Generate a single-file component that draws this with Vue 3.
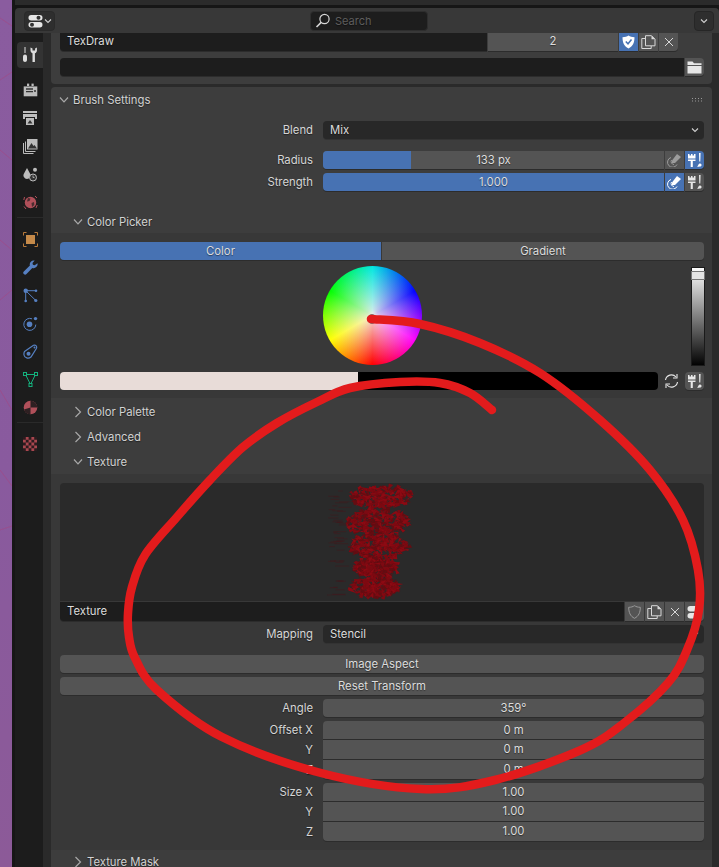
<script setup>
function rng(seed) {
  let s = seed
  return () => {
    s = (s * 16807) % 2147483647
    return s / 2147483647
  }
}
const lobes = [
  [381, 497, 31, 11],
  [378, 522, 32, 13],
  [379, 546, 29, 13],
  [377, 567, 22, 10],
  [375, 587, 25, 10]
]
const r = rng(7391)
const bits = []
for (const [cx, cy, rx, ry] of lobes) {
  for (let i = 0; i < 260; i++) {
    const a = r() * 6.283
    const d = Math.sqrt(r())
    const x = cx + Math.cos(a) * d * rx
    const y = cy + Math.sin(a) * d * ry
    const b = r() * 6.283
    const l = 1.4 + r() * 2.4
    const pts = [0, 2.6, 3.6]
      .map((t) => `${(x + Math.cos(b + t) * l * 1.3).toFixed(1)},${(y + Math.sin(b + t) * l).toFixed(1)}`)
      .join(' ')
    const pick = r()
    bits.push({ pts, fill: pick > 0.75 ? '#640d12' : pick > 0.3 ? '#7d0a12' : '#8c0a13' })
  }
}
const faint = []
for (let i = 0; i < 46; i++) {
  faint.push({ x: 327 + r() * 14, y: 488 + r() * 108, w: 4 + r() * 10 })
}

const stroke = [
  [371, 319], [420, 324], [480, 343], [540, 373], [600, 420], [650, 470], [683, 520],
  [698, 570], [699, 610], [687, 650], [668, 683], [624, 723], [581, 750], [495, 780],
  [421, 789], [321, 773], [222, 737], [157, 690], [135, 658], [129, 637], [128, 613],
  [132, 587], [145, 555], [177, 517], [210, 480], [243, 447], [277, 423], [317, 402],
  [350, 388], [400, 382], [440, 383], [470, 393], [492, 410]
]
function smooth(p) {
  let d = `M${p[0][0]} ${p[0][1]}`
  for (let i = 0; i < p.length - 1; i++) {
    const a = p[Math.max(i - 1, 0)]
    const b = p[i]
    const c = p[i + 1]
    const e = p[Math.min(i + 2, p.length - 1)]
    const c1 = [b[0] + (c[0] - a[0]) / 6, b[1] + (c[1] - a[1]) / 6]
    const c2 = [c[0] - (e[0] - b[0]) / 6, c[1] - (e[1] - b[1]) / 6]
    d += `C${c1[0].toFixed(1)} ${c1[1].toFixed(1)} ${c2[0].toFixed(1)} ${c2[1].toFixed(1)} ${c[0]} ${c[1]}`
  }
  return d
}
const strokePath = smooth(stroke)

const offset = [
  { label: 'Offset X', value: '0 m' },
  { label: 'Y', value: '0 m' },
  { label: 'Z', value: '0 m' }
]
const size = [
  { label: 'Size X', value: '1.00' },
  { label: 'Y', value: '1.00' },
  { label: 'Z', value: '1.00' }
]
</script>

<template>
  <div class="window">
    <div class="wallpaper">
      <svg width="12" height="867" viewBox="0 0 12 867">
        <path d="M0 18 12 26M0 80 12 72M0 150 12 160M0 240 12 250M0 300 12 290M0 390 12 410M0 470 12 486M0 530 12 526" stroke="#a04a88" stroke-width="1" fill="none" opacity=".7" />
      </svg>
    </div>
    <div class="editor">
      <div class="topstrip"></div>
      <header class="topbar">
        <button class="editor-type">
          <svg width="16" height="14" viewBox="0 0 16 14">
            <rect x=".5" y="1" width="14" height="5.4" rx="2.7" fill="#e6e6e6" />
            <rect x=".5" y="8" width="14" height="5.4" rx="2.7" fill="#e6e6e6" />
            <circle cx="10.5" cy="3.7" r="2" fill="#333" />
            <circle cx="4" cy="10.7" r="2" fill="#333" />
          </svg>
          <svg class="drop" width="8" height="6" viewBox="0 0 8 6"><path d="M1 1.5 4 4.5 7 1.5" stroke="#d0d0d0" stroke-width="1.1" fill="none" /></svg>
        </button>
        <div class="search">
          <svg width="16" height="16" viewBox="0 0 16 16">
            <circle cx="9.5" cy="6" r="4.6" stroke="#d8d8d8" stroke-width="1.2" fill="none" />
            <path d="M6.2 9.4 1.5 14" stroke="#d8d8d8" stroke-width="1.6" fill="none" />
          </svg>
          <span>Search</span>
        </div>
        <button class="options">
          <svg width="8" height="6" viewBox="0 0 8 6"><path d="M1 1.5 4 4.5 7 1.5" stroke="#d0d0d0" stroke-width="1.1" fill="none" /></svg>
        </button>
      </header>

      <div class="body">
        <nav class="tabs">
          <div class="tab active">
            <svg width="16" height="16" viewBox="0 0 16 16">
              <path d="M3 0v6" stroke="#ddd" stroke-width="1" /><path d="M1 9.5c0-1.2 1-2 2-2s2 .8 2 2V13c0 1-1 2-2 2s-2-1-2-2z" fill="#ddd" />
              <path d="M8.5.5v3c0 1.4 1.2 2.5 2 2.8V15h2.4V6.3c1-.4 2-1.4 2-2.8v-3l-1.8 1v2h-2.6v-2z" fill="#ddd" />
            </svg>
          </div>
          <div class="tab first">
            <svg width="15" height="14" viewBox="0 0 15 14">
              <path d="M.7 3.4h13.6v9.900H.7z" fill="#bcbcbc" /><rect x="4" y=".6" width="2.200" height="2.400" fill="#bcbcbc" /><rect x="8.500" y=".6" width="2.200" height="2.400" fill="#bcbcbc" /><path d="M3 6h7M3 8.600h7" stroke="#333" stroke-width="1.300" /><circle cx="12" cy="8" r="1" fill="#333" />
            </svg>
          </div>
          <div class="tab">
            <svg width="15" height="14" viewBox="0 0 15 14"><path d="M0 0h14v2H0zM0 3h14v5h-2V6H2v2H0z" fill="#bcbcbc" /><path d="M3 7h8v7H3z" fill="#bcbcbc" /><path d="M4.500 12.500 7 9l2.500 3.500z" fill="#333" /></svg>
          </div>
          <div class="tab">
            <svg width="15" height="15" viewBox="0 0 15 15"><path d="M.5 4v10.500h10M2.500 2.500v10h10" stroke="#bcbcbc" stroke-width="1" fill="none" /><rect x="4" y="0" width="10.500" height="10.500" fill="#bcbcbc" /><path d="M5 9.500 8.500 4 10.500 7 11.500 6 14 9.500z" fill="#333" /></svg>
          </div>
          <div class="tab">
            <svg width="15" height="15" viewBox="0 0 15 15"><path d="M4 1 7 6.500A3.600 3.600 0 0 1 4 12 3.600 3.600 0 0 1 1 6.500z" fill="#bcbcbc" /><circle cx="12" cy="2.800" r="2" fill="#bcbcbc" /><circle cx="10" cy="10.500" r="3.500" stroke="#bcbcbc" stroke-width="1" fill="#333" /><path d="M10 8.500v2h1.500" stroke="#bcbcbc" stroke-width=".8" fill="none" /></svg>
          </div>
          <div class="tab">
            <svg width="15" height="15" viewBox="0 0 15 15"><circle cx="7.500" cy="7.500" r="5.700" fill="#b0505a" /><path d="M5 3l2.500.5-1 2.500-2.500.5zM8.500 8l2.500-1 .3 3-2.300 2z" fill="#4a2c30" /><path d="M1.500 2 .8 5M13 13l1.200-3M1 11.500 3 14M12 1l2 2" stroke="#b0505a" stroke-width="1" fill="none" /></svg>
          </div>
          <div class="sep"></div>
          <div class="tab">
            <svg width="15" height="15" viewBox="0 0 15 15"><rect x="3" y="3" width="9" height="9" fill="#c58a4a" /><path d="M.5 3.500v-3h3M11.500.5h3v3M14.500 11.500v3h-3M3.500 14.500h-3v-3" stroke="#b97a3a" stroke-width="1" fill="none" /></svg>
          </div>
          <div class="tab">
            <svg width="15" height="15" viewBox="0 0 15 15"><path d="M14.500 3.200a4 4 0 0 1-5.200 4.700L3.500 14a1.800 1.800 0 0 1-2.700-2.600L6.900 5.600A4 4 0 0 1 11.700.6L9.500 3l.4 1.800 1.800.4z" fill="#5680c2" /></svg>
          </div>
          <div class="tab">
            <svg width="15" height="15" viewBox="0 0 15 15"><circle cx="2.700" cy="2.700" r="2.200" fill="#5680c2" /><circle cx="2.700" cy="13" r="1.300" fill="#5680c2" /><circle cx="13" cy="2.700" r="1.300" fill="#5680c2" /><circle cx="12.800" cy="12.500" r="1.600" fill="#5680c2" /><path d="M2.700 3v10M3 2.700h10M3 3 12.800 12.500" stroke="#5680c2" stroke-width="1" /></svg>
          </div>
          <div class="tab">
            <svg width="15" height="15" viewBox="0 0 15 15"><circle cx="6.500" cy="8.200" r="2.800" fill="#5680c2" /><path d="M9 2.800a6 6 0 1 0 3.800 5.800" stroke="#5680c2" stroke-width="1" fill="none" /><circle cx="12.500" cy="2.600" r="1.700" fill="#5680c2" /></svg>
          </div>
          <div class="tab">
            <svg width="15" height="15" viewBox="0 0 15 15"><path d="M1.500 7.500 10.500 1.300c2-.9 3.700.9 3 2.900L8 13c-2.500 2-6.500 1-7-2-.2-1.300 0-2.500.5-3.500z" stroke="#5680c2" stroke-width="1.200" fill="none" /><circle cx="5.500" cy="9.700" r="2" fill="#5680c2" /><circle cx="11.500" cy="3.500" r="1" fill="#5680c2" /></svg>
          </div>
          <div class="tab">
            <svg width="15" height="15" viewBox="0 0 15 15"><path d="M2.500 2.500h10L7.500 12.500z" stroke="#14b07c" stroke-width="1" fill="none" /><rect x=".5" y=".5" width="3" height="3" fill="#1c1c1c" stroke="#14b07c" /><rect x="11.500" y=".5" width="3" height="3" fill="#1c1c1c" stroke="#14b07c" /><rect x="6" y="11.500" width="3" height="3" fill="#1c1c1c" stroke="#14b07c" /></svg>
          </div>
          <div class="tab">
            <svg width="15" height="15" viewBox="0 0 15 15"><circle cx="7.500" cy="7.500" r="6.800" fill="#b0505a" /><path d="M7.500 .7a6.800 6.800 0 0 1 6.800 6.800H7.500zM7.500 7.500v6.800A6.800 6.800 0 0 1 1 9.500z" fill="#2e2022" /></svg>
          </div>
          <div class="sep two"></div>
          <div class="tab">
            <svg width="14" height="14" viewBox="0 0 14 14"><rect width="14" height="14" fill="#a8474f" /><path d="M0 0h2.800v2.800H0zM5.600 0h2.800v2.800H5.600zM11.200 0H14v2.800h-2.800zM2.800 2.800h2.800v2.800H2.800zM8.400 2.800h2.800v2.800H8.400zM0 5.600h2.800v2.800H0zM5.600 5.600h2.800v2.800H5.600zM11.200 5.600H14v2.800h-2.800zM2.800 8.400h2.800v2.800H2.800zM8.400 8.400h2.800v2.800H8.400zM0 11.200h2.800V14H0zM5.600 11.200h2.800V14H5.600zM11.200 11.200H14V14h-2.800z" fill="#2b1b1e" /></svg>
          </div>
        </nav>

        <main class="scroller">
          <section class="panel top-panel">
            <div class="inline">
              <div class="dark field-name">TexDraw</div>
              <div class="users">2</div>
              <div class="icon-btn blue">
                <svg width="13" height="14" viewBox="0 0 13 14"><path d="M6.500 .5c1.500 1 3.500 1.600 6 1.700 0 5-1.500 9-6 11.300C2 11.200.5 7.200.5 2.200 3 2.100 5 1.500 6.500 .5z" fill="#fff" /><path d="M3.800 6.500 6 8.800 9.500 4.500" stroke="#4772b3" stroke-width="1.500" fill="none" /></svg>
              </div>
              <div class="icon-btn">
                <svg width="15" height="14" viewBox="0 0 15 14"><path d="M4.500 3.500H.8v10h9.400V11M4.500 .7h6l3.500 3.500v6.600H4.500z" stroke="#d8d8d8" stroke-width="1" fill="none" /><path d="M10.500 .7v3.500H14" fill="#d8d8d8" /></svg>
              </div>
              <div class="icon-btn last">
                <svg width="10" height="10" viewBox="0 0 10 10"><path d="M1 1l8 8M9 1 1 9" stroke="#d8d8d8" stroke-width="1" /></svg>
              </div>
            </div>
            <div class="inline path-row">
              <div class="dark path"></div>
              <div class="icon-btn solo">
                <svg width="15" height="13" viewBox="0 0 15 13"><path d="M.5 .5h5l1.500 1.800h7.500V4H.5z" fill="#e6e6e6" /><path d="M.5 5h14v7.500H.5z" fill="#e6e6e6" /></svg>
              </div>
            </div>
          </section>

          <section class="panel main-panel">
            <div class="panel-head">
              <svg class="chev" width="10" height="8" viewBox="0 0 10 8"><path d="M1 1.500 5 5.800 9 1.500" stroke="#a8a8a8" stroke-width="1.200" fill="none" /></svg>
              <span>Brush Settings</span>
              <svg class="grip" width="12" height="4" viewBox="0 0 12 4"><path d="M0 .5h1M3 .5h1M6 .5h1M9 .5h1M0 3h1M3 3h1M6 3h1M9 3h1" stroke="#9a9a9a" stroke-width="1.200" /></svg>
            </div>

            <div class="content">
              <div class="prop blend">
                <label>Blend</label>
                <div class="select"><span>Mix</span>
                  <svg width="8" height="6" viewBox="0 0 8 6"><path d="M1 1.500 4 4.500 7 1.500" stroke="#d0d0d0" stroke-width="1.100" fill="none" /></svg>
                </div>
              </div>
              <div class="prop radius">
                <label>Radius</label>
                <div class="slider-line">
                  <div class="slider">
                    <div class="fill radius-fill"></div><span>133 px</span>
                  </div>
                  <div class="mini">
                    <svg width="15" height="14" viewBox="0 0 15 14"><path d="M10 1 14 4 8 10H5V7.500z" fill="#9c9c9c" /><path d="M4 4.500A5 5 0 1 0 10 11.500M4.500 7A3 3 0 0 0 7 11.500" stroke="#9c9c9c" stroke-width="1" fill="none" /></svg>
                  </div>
                  <div class="mini blue end">
                    <svg width="15" height="14" viewBox="0 0 15 14"><path d="M1 1h1.500v1.500H4V1h1.500v1.500H7V1h1.500v4.500H1zM1 6.500h7.500v1.500H5.800V14H3.700V8H1z" fill="#fff" /><path d="M12 0h1.600l-.3 8.500h-1z" fill="#fff" /><path d="M10 13.500c1.200 0 1-2.500 2.500-3s2.300.8 2 2-2.500 1.400-4.500 1z" fill="#fff" /></svg>
                  </div>
                </div>
              </div>
              <div class="prop strength">
                <label>Strength</label>
                <div class="slider-line">
                  <div class="slider full"><span>1.000</span></div>
                  <div class="mini blue">
                    <svg width="15" height="14" viewBox="0 0 15 14"><path d="M10 1 14 4 8 10H5V7.500z" fill="#fff" /><path d="M4 4.500A5 5 0 1 0 10 11.500M4.500 7A3 3 0 0 0 7 11.500" stroke="#fff" stroke-width="1" fill="none" /></svg>
                  </div>
                  <div class="mini end">
                    <svg width="15" height="14" viewBox="0 0 15 14"><path d="M1 1h1.500v1.500H4V1h1.500v1.500H7V1h1.500v4.500H1zM1 6.500h7.500v1.500H5.800V14H3.700V8H1z" fill="#e6e6e6" /><path d="M12 0h1.600l-.3 8.500h-1z" fill="#e6e6e6" /><path d="M10 13.500c1.200 0 1-2.500 2.500-3s2.300.8 2 2-2.500 1.400-4.500 1z" fill="#e6e6e6" /></svg>
                  </div>
                </div>
              </div>
            </div>

            <div class="sub-head picker-head">
              <svg class="chev" width="10" height="8" viewBox="0 0 10 8"><path d="M1 1.500 5 5.800 9 1.500" stroke="#a8a8a8" stroke-width="1.200" fill="none" /></svg>
              <span>Color Picker</span>
            </div>
            <div class="sub-body picker">
              <div class="seg">
                <div class="seg-on">Color</div>
                <div class="seg-off">Gradient</div>
              </div>
              <div class="wheel-row">
                <div class="wheel"><i class="cursor"></i></div>
                <div class="value"><i class="handle"></i></div>
              </div>
              <div class="swatch-row">
                <div class="swatch"><div class="swatch-a"></div><div class="swatch-b"></div></div>
                <div class="swap">
                  <svg width="15" height="14" viewBox="0 0 15 14"><path d="M1.500 6A6 6 0 0 1 12 3M13.500 8A6 6 0 0 1 3 11" stroke="#e6e6e6" stroke-width="1.100" fill="none" /><path d="M13 0v4H9M2 14v-4h4" stroke="#e6e6e6" stroke-width="1.100" fill="none" /></svg>
                </div>
                <div class="mini solo-mini">
                  <svg width="15" height="14" viewBox="0 0 15 14"><path d="M1 1h1.500v1.500H4V1h1.500v1.500H7V1h1.500v4.500H1zM1 6.500h7.500v1.500H5.800V14H3.700V8H1z" fill="#e6e6e6" /><path d="M12 0h1.600l-.3 8.500h-1z" fill="#e6e6e6" /><path d="M10 13.500c1.200 0 1-2.500 2.500-3s2.300.8 2 2-2.500 1.400-4.500 1z" fill="#e6e6e6" /></svg>
                </div>
              </div>
            </div>

            <div class="sub-head closed first-closed">
              <svg class="chev" width="8" height="12" viewBox="0 0 8 12"><path d="M1.500 1 6.500 6 1.500 11" stroke="#a8a8a8" stroke-width="1.200" fill="none" /></svg>
              <span>Color Palette</span>
            </div>
            <div class="sub-head closed">
              <svg class="chev" width="8" height="12" viewBox="0 0 8 12"><path d="M1.500 1 6.500 6 1.500 11" stroke="#a8a8a8" stroke-width="1.200" fill="none" /></svg>
              <span>Advanced</span>
            </div>
            <div class="sub-head">
              <svg class="chev" width="10" height="8" viewBox="0 0 10 8"><path d="M1 1.500 5 5.800 9 1.500" stroke="#a8a8a8" stroke-width="1.200" fill="none" /></svg>
              <span>Texture</span>
            </div>

            <div class="sub-body texture">
              <div class="preview"></div>
              <div class="inline tex-name">
                <div class="dark name">Texture</div>
                <div class="icon-btn">
                  <svg width="13" height="14" viewBox="0 0 13 14"><path d="M6.500 .7c1.500 1 3.500 1.600 5.800 1.600 0 5-1.500 8.900-5.800 11C2.200 11.200.7 7.300.7 2.300 3 2.300 5 1.700 6.500 .7z" stroke="#9a9a9a" stroke-width="1" fill="none" /></svg>
                </div>
                <div class="icon-btn">
                  <svg width="15" height="14" viewBox="0 0 15 14"><path d="M4.500 3.500H.8v10h9.400V11M4.500 .7h6l3.500 3.500v6.600H4.500z" stroke="#d8d8d8" stroke-width="1" fill="none" /><path d="M10.500 .7v3.500H14" fill="#d8d8d8" /></svg>
                </div>
                <div class="icon-btn">
                  <svg width="10" height="10" viewBox="0 0 10 10"><path d="M1 1l8 8M9 1 1 9" stroke="#d8d8d8" stroke-width="1" /></svg>
                </div>
                <div class="icon-btn last">
                  <svg width="16" height="14" viewBox="0 0 16 14"><rect x=".5" y="1" width="14" height="5.400" rx="2.700" fill="#e6e6e6" /><rect x=".5" y="8" width="14" height="5.400" rx="2.700" fill="#e6e6e6" /></svg>
                </div>
              </div>

              <div class="prop mapping">
                <label>Mapping</label>
                <div class="select"><span>Stencil</span>
                  <svg width="8" height="6" viewBox="0 0 8 6"><path d="M1 1.500 4 4.500 7 1.500" stroke="#d0d0d0" stroke-width="1.100" fill="none" /></svg>
                </div>
              </div>

              <button class="wide aspect">Image Aspect</button>
              <button class="wide reset">Reset Transform</button>

              <div class="prop angle">
                <label>Angle</label>
                <div class="num round">359°</div>
              </div>

              <div class="group offset">
                <div v-for="(row, i) in offset" :key="row.label" class="prop">
                  <label>{{ row.label }}</label>
                  <div class="num" :class="{ 'cap-top': i === 0, 'cap-bot': i === 2 }">{{ row.value }}</div>
                </div>
              </div>
              <div class="group size">
                <div v-for="(row, i) in size" :key="row.label" class="prop">
                  <label>{{ row.label }}</label>
                  <div class="num" :class="{ 'cap-top': i === 0, 'cap-bot': i === 2 }">{{ row.value }}</div>
                </div>
              </div>
            </div>

            <div class="sub-head closed">
              <svg class="chev" width="8" height="12" viewBox="0 0 8 12"><path d="M1.500 1 6.500 6 1.500 11" stroke="#a8a8a8" stroke-width="1.200" fill="none" /></svg>
              <span>Texture Mask</span>
            </div>
          </section>
        </main>
      </div>
    </div>

    <svg class="scribble" width="719" height="867" viewBox="0 0 719 867">
      <g>
        <rect v-for="(f, i) in faint" :key="'f' + i" :x="f.x" :y="f.y" :width="f.w" height="1" fill="#4a1418" opacity=".4" />
        <polygon v-for="(b, i) in bits" :key="i" :points="b.pts" :fill="b.fill" />
      </g>
      <path :d="strokePath" fill="none" stroke="#e31b1c" stroke-width="8.500" stroke-linecap="round" stroke-linejoin="round" />
    </svg>
  </div>
</template>

<style>
html, body { margin: 0; background: #1a1a1a; }
</style>

<style scoped>
.window {
  position: relative;
  width: 719px;
  height: 867px;
  overflow: hidden;
  display: flex;
  background: #161616;
  font-family: Inter, "Liberation Sans", sans-serif;
  font-size: 11.3px;
  color: #dcdcdc;
  text-shadow: 0 1px 1px rgba(0, 0, 0, .45);
}
.wallpaper {
  width: 12px;
  flex: none;
  background: linear-gradient(#8a5c9f, #895a9e 55%, #8c5a98);
}
.wallpaper svg { display: block; }
.editor {
  flex: 1;
  margin-left: 3px;
  min-width: 0;
  display: flex;
  flex-direction: column;
}
.topstrip {
  height: 5px;
  margin-bottom: 3px;
  flex: none;
  background: #2b2b2b;
}
.topbar {
  height: 25px;
  flex: none;
  display: flex;
  align-items: center;
  padding: 0 5px 0 9px;
  background: #383838;
  border-radius: 4px 4px 0 0;
  position: relative;
}
.editor-type {
  width: 31px;
  height: 20px;
  box-sizing: border-box;
  padding: 0 0 0 3px;
  display: flex;
  align-items: center;
  gap: 0;
  background: #2e2e2e;
  border: 1px solid #2a2a2a;
  border-radius: 4px;
}
.search {
  width: 118px;
  height: 20px;
  box-sizing: border-box;
  margin-left: 255px;
  padding-left: 4px;
  display: flex;
  align-items: center;
  gap: 4px;
  background: #1d1d1d;
  border: 1px solid #2e2e2e;
  border-radius: 4px;
  color: #5e5e5e;
  font-size: 11px;
}
.options {
  width: 20px;
  height: 20px;
  box-sizing: border-box;
  padding: 0;
  margin-left: auto;
  display: flex;
  align-items: center;
  justify-content: center;
  background: #2e2e2e;
  border: 1px solid #262626;
  border-radius: 4px;
}
.body {
  flex: 1;
  min-height: 0;
  display: flex;
  background: #2a2a2a;
}
.tabs {
  width: 28px;
  flex: none;
  display: flex;
  flex-direction: column;
  align-items: stretch;
  padding-top: 9px;
  box-sizing: border-box;
  background: #1c1c1c;
}
.tab {
  height: 28px;
  margin-left: 2px;
  display: flex;
  align-items: center;
  justify-content: center;
}
.tab svg { display: block; }
.tab.active {
  height: 26px;
  background: #333;
  border-radius: 4px 0 0 4px;
}
.tab.first { margin-top: 8px; }
.sep {
  height: 1px;
  background: #2a2a2a;
  margin: 1px 0 7px 2px;
}
.scroller {
  flex: 1;
  min-width: 0;
  padding: 0 7px 0 8px;
  overflow: hidden;
}
.panel { width: 661px; }
.top-panel {
  box-sizing: border-box;
  height: 51px;
  padding: 0 8px 0 9px;
  background: #3d3d3d;
  border-radius: 0 0 4px 4px;
}
.inline { display: flex; height: 18px; }
.dark {
  background: #1d1d1d;
  border-radius: 4px;
  box-shadow: 0 1px 0 #2c2c2c;
}
.field-name {
  width: 427px;
  box-sizing: border-box;
  padding-left: 7px;
  line-height: 16px;
  border-radius: 0 0 0 4px;
}
.users {
  width: 130px;
  text-align: center;
  margin-left: 1px;
  line-height: 16px;
  background: #545454;
  box-shadow: 0 1px 0 #2c2c2c;
}
.icon-btn {
  width: 19px;
  margin-left: 1px;
  display: flex;
  align-items: center;
  justify-content: center;
  background: #545454;
  box-shadow: 0 1px 0 #2c2c2c;
}
.icon-btn.last { border-radius: 0 0 4px 0; }
.icon-btn.blue { background: #4772b3; }
.path-row { margin-top: 7px; }
.path { flex: 1; border-radius: 4px 0 0 4px; }
.icon-btn.solo { border-radius: 0 4px 4px 0; }
.main-panel {
  margin-top: 3px;
  background: #3d3d3d;
  border-radius: 4px 4px 0 0;
}
.panel-head {
  height: 26px;
  padding: 0 8px;
  display: flex;
  align-items: center;
  color: #d2d2d2;
}
.panel-head .chev { margin-right: 4px; }
.grip { margin-left: auto; }
.content { padding: 8px 8px 0 9px; }
.prop {
  display: grid;
  grid-template-columns: 253px 381px;
  column-gap: 10px;
  height: 18px;
  align-items: center;
}
.prop label { text-align: right; color: #d6d6d6; }
.select {
  height: 18px;
  box-sizing: border-box;
  padding: 0 5px 0 7px;
  display: flex;
  align-items: center;
  justify-content: space-between;
  background: #282828;
  border-radius: 4px;
  box-shadow: 0 1px 0 #333;
}
.radius { margin-top: 12px; }
.strength { margin-top: 4px; }
.slider-line { display: flex; height: 18px; }
.slider {
  position: relative;
  width: 341px;
  height: 18px;
  background: #545454;
  border-radius: 4px 0 0 4px;
  box-shadow: 0 1px 0 #2c2c2c;
  text-align: center;
  line-height: 18px;
}
.slider span { position: relative; }
.slider.full { background: #4772b3; }
.fill {
  position: absolute;
  left: 0;
  top: 0;
  bottom: 0;
  background: #4772b3;
  border-radius: 4px 0 0 4px;
}
.radius-fill { width: 88px; }
.mini {
  width: 19px;
  height: 18px;
  margin-left: 1px;
  display: flex;
  align-items: center;
  justify-content: center;
  background: #545454;
  box-shadow: 0 1px 0 #2c2c2c;
}
.mini.blue { background: #4772b3; }
.mini.end { border-radius: 0 4px 4px 0; }
.sub-head {
  height: 24px;
  box-sizing: border-box;
  padding-left: 22px;
  display: flex;
  align-items: center;
  color: #d2d2d2;
}
.sub-head .chev { width: 10px; margin-right: 4px; }
.picker-head { margin-top: 18px; padding-top: 1px; }
.closed .chev { width: 8px; margin: 0 5px 0 1px; }
.first-closed { margin-top: 2px; }
.sub-head.closed { margin-bottom: 1px; }
.sub-body {
  background: #383838;
  padding: 9px 8px 8px 9px;
}
.seg { display: flex; height: 18px; box-shadow: 0 1px 0 #2c2c2c; border-radius: 4px; }
.seg-on, .seg-off { text-align: center; line-height: 18px; }
.seg-on {
  width: 321px;
  background: #4772b3;
  border-radius: 4px 0 0 4px;
}
.seg-off {
  flex: 1;
  margin-left: 1px;
  background: #545454;
  border-radius: 0 4px 4px 0;
}
.wheel-row {
  position: relative;
  height: 112px;
  padding-top: 6px;
  box-sizing: border-box;
}
.wheel {
  width: 99px;
  height: 99px;
  margin-left: 263px;
  border-radius: 50%;
  position: relative;
  background:
    radial-gradient(circle closest-side, #f4eeea 0%, rgba(244, 238, 234, .8) 12%, rgba(255, 255, 255, 0) 100%),
    conic-gradient(#00e8e0, #0000ff 60deg, #ff00ff 120deg, #ff0000 180deg, #ffff00 240deg, #00ff00 300deg, #00e8e0);
}
.cursor {
  position: absolute;
  left: 44px;
  top: 48px;
  width: 10px;
  height: 10px;
  box-sizing: border-box;
  border: 1px solid #777;
  border-radius: 50%;
}
.value {
  position: absolute;
  top: 7px;
  right: -1px;
  width: 14px;
  height: 99px;
  background: linear-gradient(#fff, #000);
  box-shadow: 0 0 0 1px #1a1a1a inset;
}
.handle {
  position: absolute;
  left: 0;
  right: 0;
  top: 4px;
  height: 9px;
  background: #e4e4e4;
  border: 1px solid #777;
  box-sizing: border-box;
}
.swatch-row { display: flex; height: 18px; }
.swatch {
  width: 598px;
  display: flex;
  border-radius: 4px;
  overflow: hidden;
}
.swatch-a { width: 298px; background: #e8dcd8; }
.swatch-b { flex: 1; background: #000; }
.swap {
  width: 27px;
  display: flex;
  align-items: center;
  justify-content: center;
}
.solo-mini { margin-left: 0; border-radius: 4px; }
.texture { padding: 9px 8px 9px 9px; }
.preview {
  height: 118px;
  background: #2a2a2a;
  border-radius: 4px 4px 0 0;
}
.tex-name { height: 19px; margin-top: 1px; }
.name {
  width: 564px;
  box-sizing: border-box;
  padding-left: 7px;
  line-height: 18px;
  border-radius: 0 0 0 4px;
}
.mapping { margin-top: 4px; }
.wide {
  display: block;
  width: 644px;
  height: 18px;
  padding: 0;
  border: 0;
  font: inherit;
  color: #dcdcdc;
  text-shadow: inherit;
  background: #545454;
  border-radius: 4px;
  box-shadow: 0 1px 0 #2c2c2c;
}
.aspect { margin-top: 12px; }
.reset { margin-top: 4px; }
.angle { margin-top: 4px; }
.num {
  height: 18px;
  line-height: 18px;
  text-align: center;
  background: #545454;
  box-shadow: 0 1px 0 #2c2c2c;
}
.num.round { border-radius: 4px; }
.group { display: flex; flex-direction: column; gap: 1px; }
.group .prop { height: 19px; }
.group .prop:first-child { height: 18px; }
.group .num { height: 19px; line-height: 19px; }
.group .cap-top { height: 18px; line-height: 18px; border-radius: 4px 4px 0 0; }
.group .cap-bot { border-radius: 0 0 4px 4px; }
.offset, .size { margin-top: 4px; }
.scribble {
  position: absolute;
  left: 0;
  top: 0;
  pointer-events: none;
}
</style>
